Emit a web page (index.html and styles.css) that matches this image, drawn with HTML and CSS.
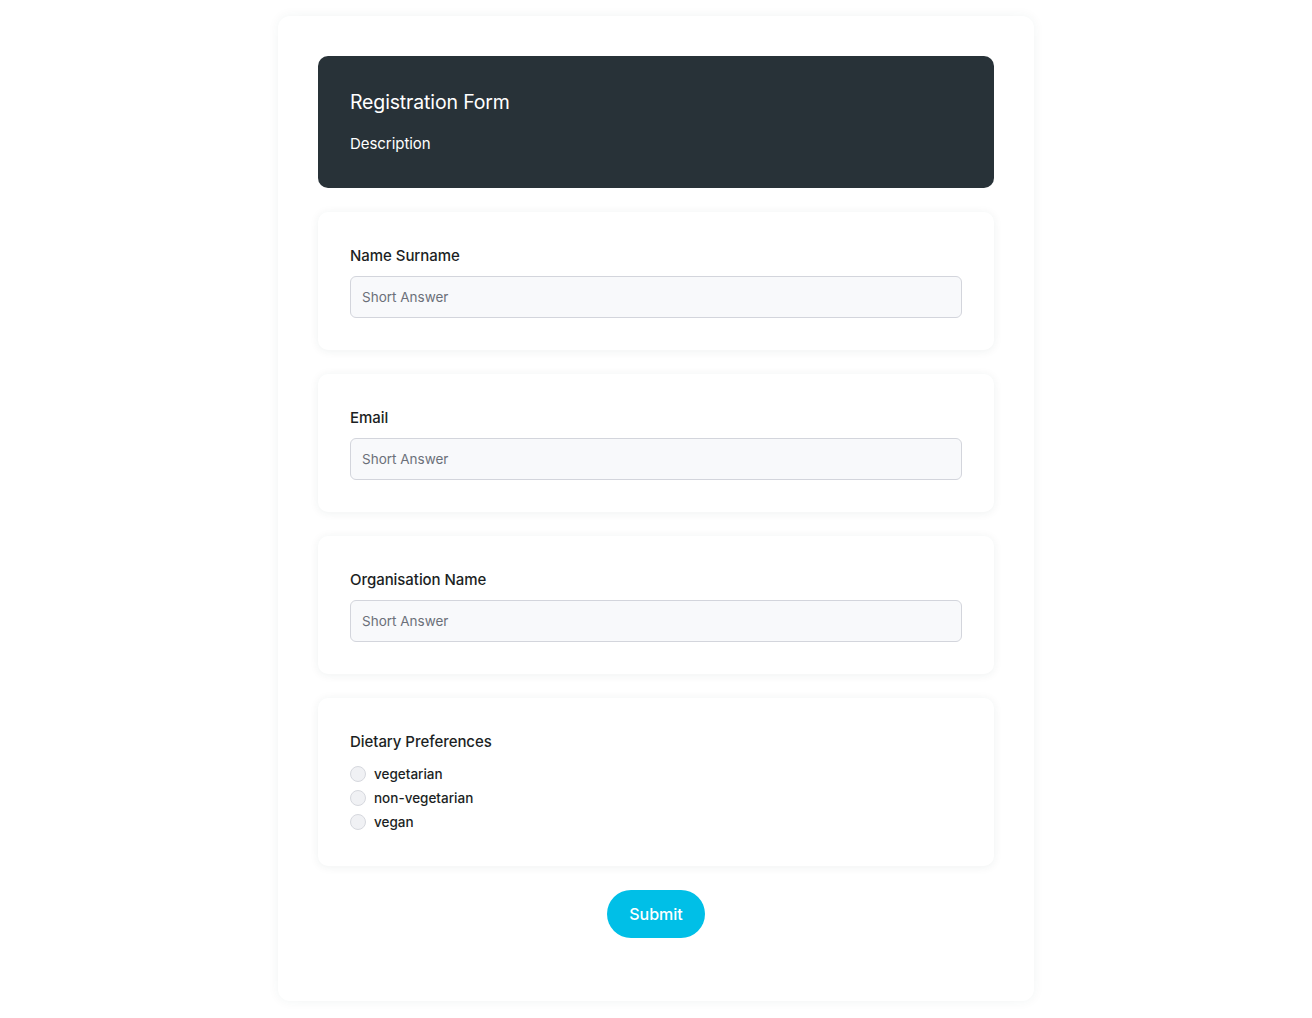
FILE: index.html
```html
<!DOCTYPE html>
<html lang="en">
<head>
<meta charset="utf-8">
<title>Registration Form</title>
<link rel="stylesheet" href="styles.css">
</head>
<body>
<main class="page">
  <form class="form-shell">
    <header class="form-header">
      <h1 class="form-title">Registration Form</h1>
      <p class="form-desc">Description</p>
    </header>

    <section class="question">
      <label class="q-label" for="name">Name Surname</label>
      <input class="q-input" id="name" type="text" placeholder="Short Answer">
    </section>

    <section class="question">
      <label class="q-label" for="email">Email</label>
      <input class="q-input" id="email" type="text" placeholder="Short Answer">
    </section>

    <section class="question">
      <label class="q-label" for="org">Organisation Name</label>
      <input class="q-input" id="org" type="text" placeholder="Short Answer">
    </section>

    <section class="question">
      <div class="q-label">Dietary Preferences</div>
      <div class="options">
        <label class="option"><span class="radio"></span><span>vegetarian</span></label>
        <label class="option"><span class="radio"></span><span>non-vegetarian</span></label>
        <label class="option"><span class="radio"></span><span>vegan</span></label>
      </div>
    </section>

    <div class="actions">
      <button class="submit" type="button">Submit</button>
    </div>
  </form>
</main>
</body>
</html>
```

FILE: styles.css
```css
* { box-sizing: border-box; }

body {
  margin: 0;
  background: #ffffff;
  font-family: "Inter", "Noto Sans", sans-serif;
  color: #1f2328;
}

.page {
  display: flex;
  justify-content: center;
  padding: 16px 0 17px;
}

.form-shell {
  width: 756px;
  background: #ffffff;
  border-radius: 12px;
  box-shadow: 0 0 12px rgba(30, 60, 60, 0.06);
  padding: 40px 40px 63px;
  display: flex;
  flex-direction: column;
  gap: 24px;
}

.form-header {
  background: #283238;
  color: #ffffff;
  border-radius: 10px;
  padding: 32px;
}

.form-title {
  margin: 0 0 16px;
  font-size: 19.5px;
  line-height: 28px;
  font-weight: 400;
  letter-spacing: -0.15px;
}

.form-desc {
  margin: 0;
  font-size: 15px;
  line-height: 24px;
  letter-spacing: -0.05px;
}

.question {
  background: #ffffff;
  border-radius: 10px;
  box-shadow: 0 1px 10px rgba(30, 60, 60, 0.07);
  padding: 32px;
  display: flex;
  flex-direction: column;
}

.q-label {
  font-size: 15px;
  line-height: 24px;
  font-weight: 500;
  color: #1c1f24;
  margin-bottom: 8px;
  letter-spacing: -0.05px;
}

.q-input {
  width: 100%;
  height: 42px;
  border: 1px solid #d3d5dc;
  border-radius: 6px;
  background: #f8f9fb;
  padding: 0 11px;
  font-family: inherit;
  font-size: 13.5px;
  color: #1f2328;
  outline: none;
}

.q-input::placeholder { color: #6b7079; }

.options {
  display: flex;
  flex-direction: column;
}

.option {
  display: flex;
  align-items: center;
  gap: 8px;
  height: 24px;
  font-size: 13.5px;
  color: #1c1f24;
  font-weight: 500;
}

.radio {
  width: 16px;
  height: 16px;
  border-radius: 50%;
  background: #f0f1f4;
  border: 1px solid #d6d8de;
  flex: none;
}

.actions {
  display: flex;
  justify-content: center;
}

.submit {
  width: 98px;
  height: 48px;
  border: none;
  border-radius: 24px;
  background: #00bfe7;
  color: #ffffff;
  font-family: inherit;
  font-size: 16px;
  font-weight: 500;
  cursor: pointer;
}
```
